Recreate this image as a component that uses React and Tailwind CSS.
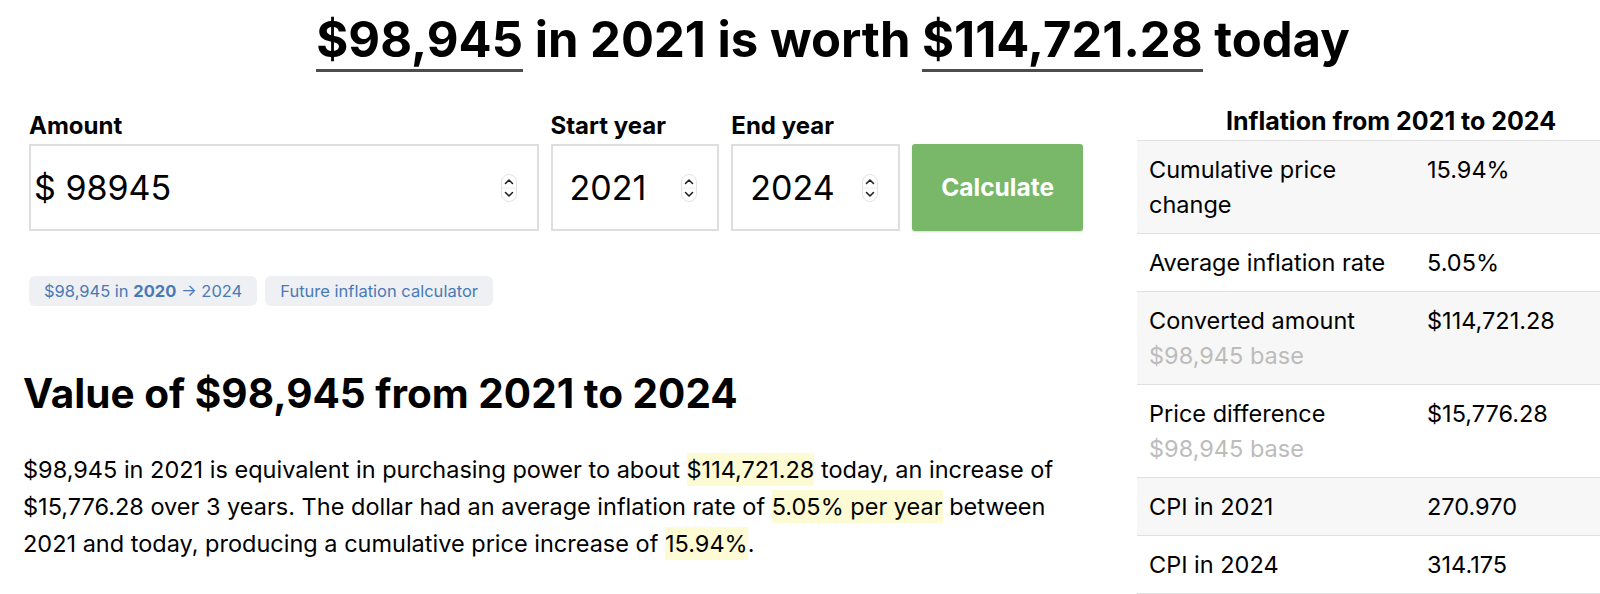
import React from 'react';

const Spinner = () => (
  <svg width="16" height="28" viewBox="0 0 16 28" className="shrink-0">
    <rect x="0.5" y="0.5" width="15" height="27" rx="7.5" fill="#fff" stroke="#e3e3e3" />
    <line x1="1" y1="14" x2="15" y2="14" stroke="#ececec" />
    <path d="M4.5 9.5 L8 6 L11.5 9.5" fill="none" stroke="#222" strokeWidth="1.6" strokeLinecap="round" strokeLinejoin="round" />
    <path d="M4.5 18.5 L8 22 L11.5 18.5" fill="none" stroke="#222" strokeWidth="1.6" strokeLinecap="round" strokeLinejoin="round" />
  </svg>
);

const rows = [
  { label: 'Cumulative price change', value: '15.94%' },
  { label: 'Average inflation rate', value: '5.05%' },
  { label: 'Converted amount', sub: '$98,945 base', value: '$114,721.28' },
  { label: 'Price difference', sub: '$98,945 base', value: '$15,776.28' },
  { label: 'CPI in 2021', value: '270.970' },
  { label: 'CPI in 2024', value: '314.175' },
];

const Hl = ({ children }) => <span className="bg-[#fdfbd4] py-[2px]">{children}</span>;

export default function App() {
  return (
    <div className="w-[1600px] h-[594px] overflow-hidden bg-white text-black font-['Inter','Noto_Sans',sans-serif]">
      <div className="w-[1643px] pl-[23px]">
        <h1 className="pt-[10px] text-center text-[49px] leading-[60px] font-bold">
          <span className="border-b-[3px] border-[#4d4d4d]">$98,945</span> in 2021 is worth{' '}
          <span className="border-b-[3px] border-[#4d4d4d]">$114,721.28</span> today
        </h1>

        <div className="flex gap-[54px]">
          {/* left column */}
          <div className="w-[1060px] shrink-0 pt-[41px]">
            <div className="flex gap-[12px] pl-[6px]">
              <div className="w-[510px]">
                <div className="text-[24px] leading-[30px] font-bold mb-[3px]">Amount</div>
                <div className="h-[87px] border-2 border-[#dedede] flex items-center justify-between pl-[3px] pr-[20px]">
                  <span className="text-[34px]">$ 98945</span>
                  <Spinner />
                </div>
              </div>
              <div className="w-[169px]">
                <div className="text-[24px] leading-[30px] font-bold mb-[3px]">Start year</div>
                <div className="h-[87px] border-2 border-[#dedede] flex items-center justify-between pl-[17px] pr-[20px]">
                  <span className="text-[34px]">2021</span>
                  <Spinner />
                </div>
              </div>
              <div className="w-[169px]">
                <div className="text-[24px] leading-[30px] font-bold mb-[3px]">End year</div>
                <div className="h-[87px] border-2 border-[#dedede] flex items-center justify-between pl-[17px] pr-[20px]">
                  <span className="text-[34px]">2024</span>
                  <Spinner />
                </div>
              </div>
              <div className="w-[171px] flex flex-col justify-end">
                <button className="h-[87px] w-full rounded-[3px] bg-[#78b868] text-white text-[24.5px] font-bold shadow-[0_1px_2px_rgba(0,0,0,0.15)]">
                  Calculate
                </button>
              </div>
            </div>

            <div className="flex gap-[8px] pl-[6px] mt-[45px]">
              <span className="h-[30px] px-[15px] flex items-center rounded-[6px] bg-[#eef0f3] text-[16.5px] text-[#4a7ab6]">
                $98,945 in&nbsp;<b>2020</b>&nbsp;→ 2024
              </span>
              <span className="h-[30px] px-[15px] flex items-center rounded-[6px] bg-[#eef0f3] text-[16.5px] text-[#4a7ab6]">
                Future inflation calculator
              </span>
            </div>

            <h2 className="mt-[66px] text-[40.5px] leading-[44px] font-bold">Value of $98,945 from 2021 to 2024</h2>

            <p className="mt-[35px] w-[1050px] text-[23.5px] leading-[37px]">
              $98,945 in 2021 is equivalent in purchasing power to about <Hl>$114,721.28</Hl> today, an increase of
              $15,776.28 over 3 years. The dollar had an average inflation rate of <Hl>5.05% per year</Hl> between
              2021 and today, producing a cumulative price increase of <Hl>15.94%</Hl>.
            </p>
          </div>

          {/* right column */}
          <div className="w-[508px] shrink-0 pt-[36px]">
            <div className="text-center text-[25px] leading-[30px] font-bold pb-[4px]">Inflation from 2021 to 2024</div>
            <div className="border-t border-[#e0e0e0]">
              {rows.map((r, i) => (
                <div
                  key={r.label}
                  className={`flex border-b border-[#e0e0e0] py-[11px] text-[23.5px] leading-[35px] ${i % 2 === 0 ? 'bg-[#f7f7f7]' : 'bg-white'}`}
                >
                  <div className="w-[290px] shrink-0 pl-[12px] pr-[12px]">
                    <div>{r.label}</div>
                    {r.sub && <div className="text-[#bcbcbc]">{r.sub}</div>}
                  </div>
                  <div>{r.value}</div>
                </div>
              ))}
            </div>
          </div>
        </div>
      </div>
    </div>
  );
}
